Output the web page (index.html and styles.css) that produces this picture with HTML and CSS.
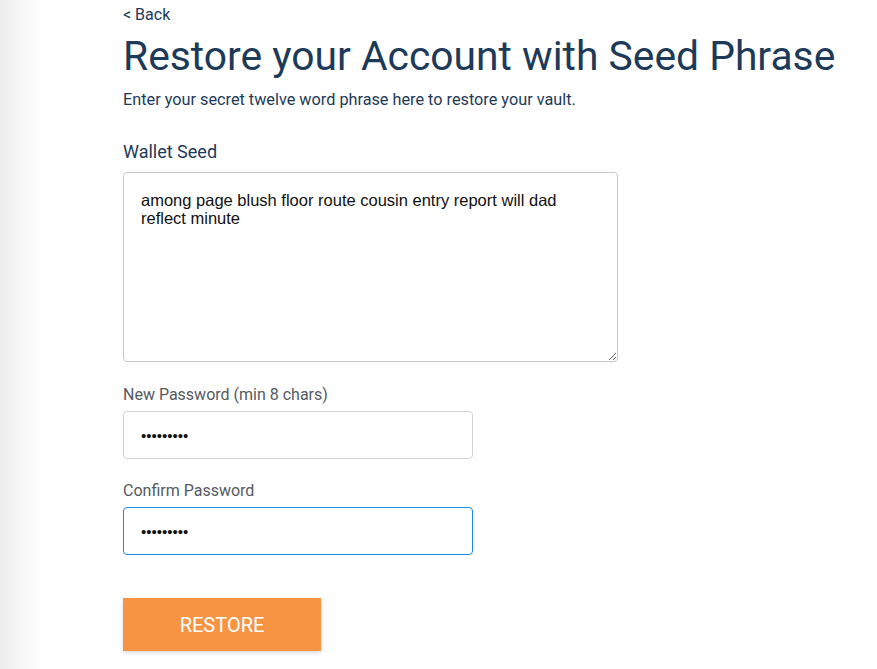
FILE: index.html
```html
<!DOCTYPE html>
<html>
<head>
<meta charset="utf-8">
<link rel="stylesheet" href="styles.css">
</head>
<body>
<div class="page">
  <a class="back" href="#">&lt; Back</a>
  <h1 class="title">Restore your Account with Seed Phrase</h1>
  <p class="lead">Enter your secret twelve word phrase here to restore your vault.</p>
  <label class="seed-label">Wallet Seed</label>
  <textarea class="seed">among page blush floor route cousin entry report will dad reflect minute</textarea>
  <label class="pw-label">New Password (min 8 chars)</label>
  <input class="pw" type="password" value="password1">
  <label class="pw-label">Confirm Password</label>
  <input class="pw pw-focus" type="password" value="password1">
  <button class="restore">RESTORE</button>
</div>
</body>
</html>
```
FILE: styles.css
```css
html, body {
  margin: 0;
  padding: 0;
  height: 100%;
}
body {
  background: linear-gradient(to right, #ececec 0px, #f6f6f6 20px, #ffffff 42px);
  font-family: Roboto, "Noto Sans", sans-serif;
  color: #1d3a58;
}
.page {
  display: flex;
  flex-direction: column;
  align-items: flex-start;
  padding-left: 123px;
  padding-top: 5px;
}
.back {
  font-size: 16px;
  line-height: 19px;
  color: #1d3a58;
  text-decoration: none;
}
.title {
  margin: 9px 0 0;
  font-size: 40.8px;
  font-weight: 400;
  line-height: 47px;
  color: #1d3a58;
}
.lead {
  margin: 11px 0 0;
  font-size: 16.25px;
  line-height: 18px;
}
.seed-label {
  margin-top: 33px;
  font-size: 18px;
  line-height: 20px;
}
.seed {
  margin-top: 10px;
  margin-bottom: 1px;
  width: 495px;
  height: 190px;
  box-sizing: border-box;
  border: 1px solid #c8c8c8;
  border-radius: 4px;
  padding: 18px 17px;
  font-family: "Liberation Sans", Arial, sans-serif;
  font-size: 16.5px;
  line-height: 18px;
  color: #111;
  resize: vertical;
  outline: none;
}
.pw-label {
  margin-top: 23px;
  font-size: 16px;
  line-height: 18px;
  color: #555a5f;
}
.pw {
  margin-top: 7px;
  width: 350px;
  height: 48px;
  box-sizing: border-box;
  border: 1px solid #cfd3d7;
  border-radius: 4px;
  padding: 0 17px;
  font-family: "Liberation Sans", Arial, sans-serif;
  font-size: 15px;
  color: #111;
  outline: none;
}
.pw-focus {
  border-color: #1e88e5;
}
.restore {
  margin-top: 43px;
  width: 198px;
  height: 53px;
  border: none;
  background: #f69443;
  color: #fff;
  font-family: Roboto, sans-serif;
  font-size: 20px;
  box-shadow: 0 2px 4px rgba(0,0,0,0.15);
  cursor: pointer;
}
```
